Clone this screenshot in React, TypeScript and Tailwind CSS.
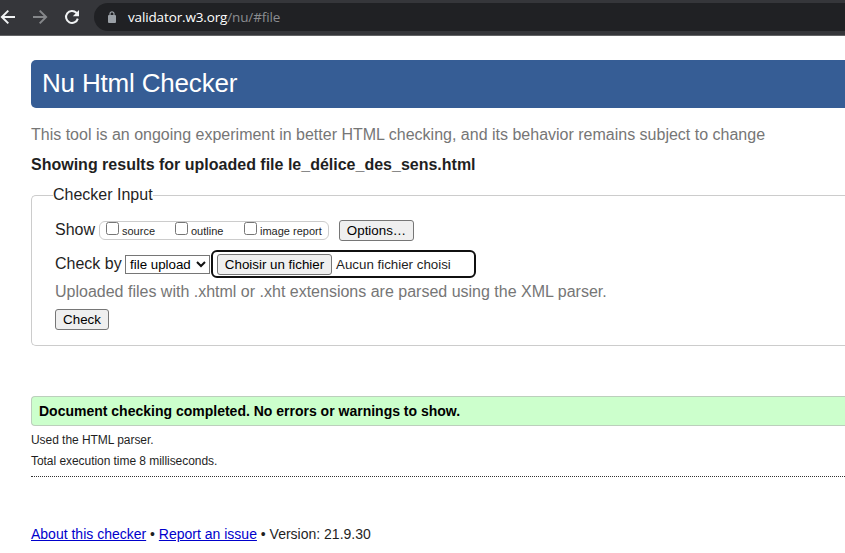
import type { ReactNode } from "react";

function Toolbar() {
  return (
    <header className="flex h-9 items-start border-b border-[#626365] bg-[#35363a]">
      <div className="flex h-[34px] w-[94px] shrink-0 items-center">
        <svg className="h-4 w-4 shrink-0" viewBox="0 0 16 16" fill="none" stroke="#f1f3f4" strokeWidth="2">
          <path d="M15 8H2.2M8.3 1.6 1.9 8l6.4 6.4" />
        </svg>
        <svg className="ml-4 h-4 w-4 shrink-0" viewBox="0 0 16 16" fill="none" stroke="#85878a" strokeWidth="2">
          <path d="M1 8h12.8M7.7 1.6 14.1 8l-6.4 6.4" />
        </svg>
        <svg className="ml-4 h-4 w-4 shrink-0" viewBox="0 0 16 16" fill="none" stroke="#f1f3f4" strokeWidth="2">
          <path d="M13.8 9.6A6 6 0 1 1 12.4 3.8L13.5 5" />
          <path d="M15 1v6.2H8.8z" fill="#f1f3f4" stroke="none" />
        </svg>
      </div>
      <div className="mt-[3px] flex h-7 flex-1 items-center rounded-l-full bg-[#202124] pl-[14px]">
        <svg className="mb-px h-3 w-2 shrink-0" viewBox="0 0 8 12">
          <path d="M2 5V2.8a2 2 0 0 1 4 0V5" fill="none" stroke="#9aa0a6" strokeWidth="1.2" />
          <rect y="4" width="8" height="8" rx="1" fill="#9aa0a6" />
        </svg>
        <span className="mb-px ml-3 whitespace-nowrap font-['Open_Sans','Noto_Sans',sans-serif] text-[13.5px] leading-5 tracking-[-0.14px] text-white">
          validator.w3.org<span className="text-[#8b8d91]">/nu/#file</span>
        </span>
      </div>
    </header>
  );
}

function Button({ className, children }: { className: string; children: ReactNode }) {
  return (
    <button
      className={`h-[21px] shrink-0 rounded-[3px] border border-[#767676] bg-[#efefef] text-center text-[13.333px] leading-[19px] whitespace-nowrap text-black ${className}`}
    >
      {children}
    </button>
  );
}

function Option({ label, className }: { label: string; className: string }) {
  return (
    <label className={`flex shrink-0 items-start ${className}`}>
      <input type="checkbox" className="h-[13px] w-[13px] shrink-0 appearance-none rounded-[2.5px] border border-[#767676] bg-white" />
      <span className="mt-[3px] ml-[3px] text-[11px] leading-[13px] whitespace-nowrap">{label}</span>
    </label>
  );
}

export default function App() {
  return (
    <div className="h-[553px] w-[845px] overflow-hidden bg-white font-['Liberation_Sans',Arial,sans-serif] text-[#1f1f1f]">
      <Toolbar />
      <main className="pt-6 pl-[31px]">
        <h1 className="h-12 rounded-l-[5px] bg-[#365d95] pl-[11px] text-[26px] leading-[47px] tracking-[-0.18px] text-white">Nu Html Checker</h1>
        <p className="mt-[17px] text-base leading-5 whitespace-nowrap text-[#767676]">
          This tool is an ongoing experiment in better HTML checking, and its behavior remains subject to change
        </p>
        <h2 className="mt-[10px] text-base leading-5 font-bold">Showing results for uploaded file le_délice_des_sens.html</h2>

        <fieldset className="mt-[10px] h-[161px] rounded-l-[5px] border border-r-0 border-[#ccc] pl-[23px]">
          <legend className="-ml-0.5 h-5 text-base leading-5">Checker Input</legend>
          <div className="mt-[15px] flex h-[21px]">
            <span className="w-11 shrink-0 text-base leading-5">Show</span>
            <div className="mt-px flex h-[19px] w-[230px] shrink-0 rounded-[6px] border border-[#ccc] pl-[6px]">
              <Option label="source" className="w-[69px]" />
              <Option label="outline" className="w-[69px]" />
              <Option label="image report" className="w-[82px]" />
            </div>
            <Button className="ml-[10px] w-[75px]">Options…</Button>
          </div>
          <div className="mt-[9px] flex h-7 items-start">
            <span className="mt-1 w-[70px] shrink-0 text-base leading-5">Check by</span>
            <button className="mt-[5px] flex h-[19px] w-[85px] shrink-0 items-center border border-[#767676] bg-white pl-1 text-[13.333px] leading-[17px] whitespace-nowrap text-black">
              file upload
              <svg className="-mt-0.5 ml-[5px] h-2 w-[10px] shrink-0" viewBox="0 0 10 8" fill="none" stroke="#111" strokeWidth="2">
                <path d="m1 2 4 4 4-4" />
              </svg>
            </button>
            <div className="ml-px flex h-7 w-[265px] shrink-0 items-center rounded-[6px] border-2 border-[#101010] pl-1">
              <Button className="w-[115px]">Choisir un fichier</Button>
              <span className="mt-0.5 ml-1 text-[13.333px] leading-5 whitespace-nowrap">Aucun fichier choisi</span>
            </div>
          </div>
          <p className="mt-1 text-base leading-5 whitespace-nowrap text-[#767676]">
            Uploaded files with .xhtml or .xht extensions are parsed using the XML parser.
          </p>
          <Button className="mt-[7px] block w-[54px]">Check</Button>
        </fieldset>

        <div className="mt-[50px] h-[30px] rounded-l-[4px] border border-r-0 border-[#bccfbc] bg-[#ccffcc] pl-[7px] text-[14px] leading-[28px] font-bold text-black">
          Document checking completed. No errors or warnings to show.
        </div>
        <p className="mt-[6px] text-xs leading-4 tracking-[-0.05px]">Used the HTML parser.</p>
        <p className="mt-[5px] text-xs leading-4 tracking-[-0.05px]">Total execution time 8 milliseconds.</p>
        <hr className="mt-[7px] border-t border-dotted border-[#333]" />
        <footer className="mt-[47px] text-[14px] leading-5 whitespace-nowrap">
          <a className="text-[#0000cc] underline">About this checker</a> • <a className="text-[#0000cc] underline">Report an issue</a> • Version: 21.9.30
        </footer>
      </main>
    </div>
  );
}
